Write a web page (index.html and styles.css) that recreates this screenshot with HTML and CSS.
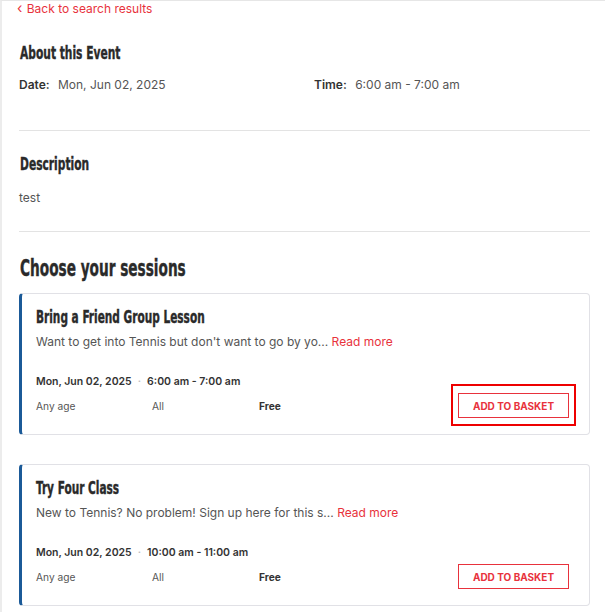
FILE: index.html
```html
<!DOCTYPE html>
<html lang="en">
<head>
    <meta charset="UTF-8">
    <title>Event details</title>
    <link rel="stylesheet" href="styles.css">
</head>
<body>
    <div class="page">
        <a class="back" href="#"><span class="chev">&lsaquo;</span> Back to search results</a>

        <section class="block">
            <h2 class="heading"><span>About this Event</span></h2>
            <div class="meta">
                <div><span class="label">Date:</span> Mon, Jun 02, 2025</div>
                <div><span class="label">Time:</span> 6:00 am - 7:00 am</div>
            </div>
        </section>

        <section class="block">
            <h2 class="heading"><span>Description</span></h2>
            <p class="desc">test</p>
        </section>

        <section class="sessions">
            <h2 class="heading big"><span>Choose your sessions</span></h2>

            <div class="card">
                <h3 class="card-title"><span>Bring a Friend Group Lesson</span></h3>
                <p class="card-text">Want to get into Tennis but don't want to go by yo... <a href="#">Read more</a></p>
                <div class="when">
                    <span>Mon, Jun 02, 2025</span>
                    <span class="dot">&middot;</span>
                    <span>6:00 am - 7:00 am</span>
                </div>
                <div class="info">
                    <span>Any age</span>
                    <span>All</span>
                    <span class="price">Free</span>
                    <span class="btn-wrap focused"><button class="add">ADD TO BASKET</button></span>
                </div>
            </div>

            <div class="card">
                <h3 class="card-title"><span>Try Four Class</span></h3>
                <p class="card-text">New to Tennis? No problem! Sign up here for this s... <a href="#">Read more</a></p>
                <div class="when">
                    <span>Mon, Jun 02, 2025</span>
                    <span class="dot">&middot;</span>
                    <span>10:00 am - 11:00 am</span>
                </div>
                <div class="info">
                    <span>Any age</span>
                    <span>All</span>
                    <span class="price">Free</span>
                    <span class="btn-wrap"><button class="add">ADD TO BASKET</button></span>
                </div>
            </div>
        </section>
    </div>
</body>
</html>
```

FILE: styles.css
```css
body {
    margin: 0;
    font-family: Inter, "Liberation Sans", sans-serif;
    color: #555;
    background: #fff;
}

.page {
    border-top: 1px solid #e6e6e6;
    border-left: 2px solid #ececec;
    padding: 0 15px 0 17px;
    min-height: 611px;
}

.back {
    display: block;
    color: #e8323c;
    text-decoration: none;
    font-size: 12px;
    line-height: 14px;
    margin-left: -2px;
}

.chev {
    font-size: 14px;
    margin-right: 1px;
}

.block {
    border-bottom: 1px solid #e3e3e3;
}

/* condensed display headings */
.heading,
.card-title {
    font-family: "DejaVu Sans Condensed", "DejaVu Sans", sans-serif;
    font-weight: bold;
    color: #2a2a2a;
    margin: 0;
    -webkit-text-stroke: 0.4px #2a2a2a;
}

.heading span,
.card-title span {
    display: inline-block;
    transform: scaleX(0.66);
    transform-origin: left center;
    margin-left: 1px;
}

.heading {
    font-size: 18px;
    line-height: 21px;
}

.block:first-of-type .heading {
    margin-top: 26px;
}

.meta {
    display: grid;
    grid-template-columns: 295px 1fr;
    font-size: 12px;
    line-height: 16px;
    margin: 14px 0 37px;
}

.label {
    font-weight: 600;
    color: #333;
    margin-right: 5px;
}

.block:nth-of-type(2) .heading {
    margin-top: 22px;
}

.desc {
    font-size: 12px;
    line-height: 16px;
    margin: 16px 0 25px;
}

.big {
    font-size: 23px;
    line-height: 26px;
    margin: 23px 0 12px;
}

.card {
    border: 1px solid #e1e1e6;
    border-left: 3px solid #1b5a98;
    border-radius: 4px;
    padding: 13px 20px 16px 14px;
    margin-bottom: 29px;
}

.card-title {
    font-size: 17px;
    line-height: 20px;
    margin-bottom: 7px;
}

.card-title span {
    transform: scaleX(0.69);
    margin-left: 0;
}

.card-text {
    font-size: 12px;
    line-height: 16px;
    margin: 0 0 25px;
}

.card-text a {
    color: #e8323c;
    text-decoration: none;
}

.when {
    font-size: 10.5px;
    line-height: 14px;
    font-weight: 600;
    color: #333;
    display: flex;
    gap: 6px;
}

.dot {
    color: #bbb;
}

.info {
    display: grid;
    grid-template-columns: 116px 107px 1fr auto;
    align-items: center;
    font-size: 10.2px;
    margin-top: 4px;
}

.price {
    font-weight: 700;
    color: #333;
}

.btn-wrap {
    position: relative;
}

.focused::after {
    content: "";
    position: absolute;
    inset: -9px -7px -8px -7px;
    border: 2px solid #ee0000;
}

.add {
    background: #fff;
    border: 1px solid #e8323c;
    color: #e8323c;
    font-family: Inter, "Liberation Sans", sans-serif;
    font-weight: 700;
    font-size: 10px;
    width: 111px;
    height: 25px;
    padding: 0;
}
```
